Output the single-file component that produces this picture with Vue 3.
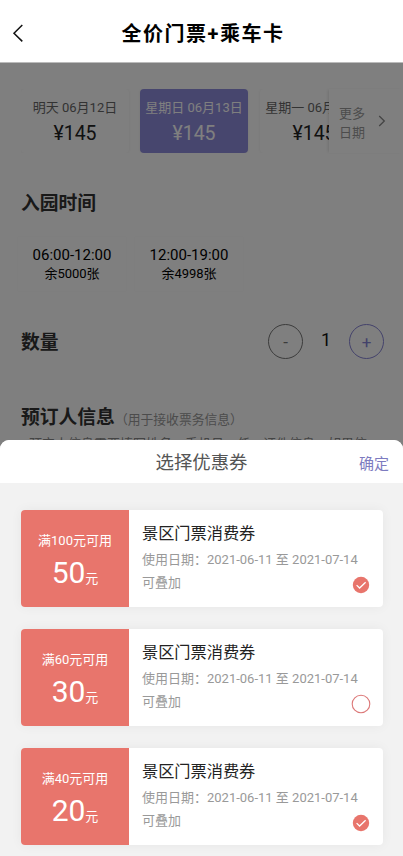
<script setup>
const dates = [
  { label: '明天 06月12日', price: '¥145' },
  { label: '星期日 06月13日', price: '¥145', active: true },
  { label: '星期一 06月14日', price: '¥145' },
]
const slots = [
  { time: '06:00-12:00', left: '余5000张' },
  { time: '12:00-19:00', left: '余4998张' },
]
const coupons = [
  { min: 100, value: 50, checked: true },
  { min: 60, value: 30, checked: false },
  { min: 40, value: 20, checked: true },
]
</script>

<template>
  <div class="screen">
    <header class="nav">
      <svg class="back" viewBox="0 0 12 20" width="12" height="20"><path d="M10.3 2 2 10.2l8.3 8.2" /></svg>
      <h1>全价门票+乘车卡</h1>
    </header>

    <main class="page">
      <h2 class="title first">游玩日期</h2>
      <div class="dates">
        <div class="strip">
          <div v-for="d in dates" :key="d.label" class="date" :class="{ active: d.active }">
            <span class="day">{{ d.label }}</span>
            <span class="price">{{ d.price }}</span>
          </div>
        </div>
        <div class="more">
          <span>更多<br />日期</span>
          <svg viewBox="0 0 8 12" width="8" height="12"><path d="M1.2 1 6.3 6l-5.1 5" /></svg>
        </div>
      </div>

      <h2 class="title time-title">入园时间</h2>
      <div class="slots">
        <div v-for="s in slots" :key="s.time" class="slot">
          <span class="time">{{ s.time }}</span>
          <span class="left">{{ s.left }}</span>
        </div>
      </div>

      <div class="quantity">
        <h2 class="title">数量</h2>
        <div class="stepper">
          <button class="step">-</button>
          <span class="count">1</span>
          <button class="step plus">+</button>
        </div>
      </div>

      <div class="booker">
        <h2 class="title">预订人信息</h2>
        <span class="hint">（用于接收票务信息）</span>
      </div>
      <p class="notice">预定人信息需要填写姓名、手机号、任一证件信息，如果信</p>
      <div class="mask"></div>
    </main>

    <section class="sheet">
      <div class="sheet-head">
        <span class="sheet-title">选择优惠券</span>
        <span class="confirm">确定</span>
      </div>
      <div class="list">
        <article v-for="c in coupons" :key="c.min" class="coupon">
          <div class="amount">
            <span class="rule">满{{ c.min }}元可用</span>
            <span class="value">{{ c.value }}<small>元</small></span>
          </div>
          <div class="info">
            <h3>景区门票消费券</h3>
            <p>使用日期：2021-06-11 至 2021-07-14</p>
            <p>可叠加</p>
          </div>
          <svg class="radio" viewBox="0 0 20 20" width="20" height="20">
            <template v-if="c.checked">
              <circle class="disc" cx="10" cy="10" r="8.2" />
              <path class="tick" d="m5.6 10.1 3 2.9 6-5.8" />
            </template>
            <circle v-else class="ring" cx="10" cy="10" r="8.8" />
          </svg>
        </article>
      </div>
    </section>
  </div>
</template>

<style>
body {
  margin: 0;
}
</style>

<style scoped>
.screen {
  width: 403px;
  height: 856px;
  display: flex;
  flex-direction: column;
  overflow: hidden;
  background: #808080;
  font-family: Roboto, "Noto Sans CJK SC", sans-serif;
  color: #222;
}
h1, h2, h3, p {
  margin: 0;
}
.nav {
  flex: none;
  height: 63px;
  box-sizing: border-box;
  padding: 4px 13px 0 12px;
  display: flex;
  align-items: center;
  background: #fff;
  border-bottom: 1px solid #bbb;
}
.back path {
  fill: none;
  stroke: #111;
  stroke-width: 1.5;
}
.nav h1 {
  flex: 1;
  margin-right: 12px;
  padding: 2px 0 0 4px;
  text-align: center;
  font-size: 20px;
  line-height: 28px;
  letter-spacing: 1.5px;
  font-weight: 700;
  color: #000;
}
.page {
  position: relative;
  flex: none;
  height: 377px;
  overflow: hidden;
  background: #fff;
}
.mask {
  position: absolute;
  inset: 0;
  background: rgba(0, 0, 0, 0.5);
}
.title {
  font-size: 18.8px;
  line-height: 28px;
  font-weight: 700;
  color: #333;
}
.first {
  margin: -22px 0 0 21px;
}
.dates {
  display: flex;
  margin: 20px 0 0 21px;
}
.strip {
  width: 308px;
  display: flex;
  gap: 11px;
  overflow: hidden;
}
.date {
  flex: none;
  width: 108px;
  height: 64px;
  box-sizing: border-box;
  padding-top: 9px;
  display: flex;
  flex-direction: column;
  align-items: center;
  border-radius: 4px;
  box-shadow: 0 0 3px rgba(0, 0, 0, 0.08);
}
.date:last-child {
  margin-left: 1px;
}
.date.active {
  background: #8f8cdd;
}
.day {
  font-size: 13px;
  line-height: 19px;
  color: #666;
  white-space: nowrap;
}
.price {
  margin-top: 4px;
  font-size: 19.5px;
  line-height: 26px;
  color: #222;
}
.active .day,
.active .price {
  color: #fff;
}
.more {
  flex: 1;
  display: flex;
  align-items: center;
  gap: 13px;
  padding: 3px 0 0 10px;
  box-shadow: -2px 0 3px -1px rgba(0, 0, 0, 0.12);
  font-size: 13px;
  line-height: 19px;
  color: #999;
}
.more svg path {
  fill: none;
  stroke: #888;
  stroke-width: 1.3;
}
.more svg {
  margin-top: -3px;
}
.time-title {
  margin: 37px 0 0 21px;
}
.slots {
  display: flex;
  gap: 9px;
  margin: 19px 0 0 18px;
}
.slot {
  width: 108px;
  height: 54px;
  box-sizing: border-box;
  padding-top: 8px;
  display: flex;
  flex-direction: column;
  align-items: center;
  color: #000;
  box-shadow: 0 0 3px rgba(0, 0, 0, 0.04);
}
.time {
  font-size: 15px;
  line-height: 20px;
}
.left {
  font-size: 13px;
  line-height: 18px;
}
.quantity {
  display: flex;
  justify-content: space-between;
  align-items: center;
  margin: 33px 19px 0 21px;
}
.quantity .title {
  padding-top: 2px;
}
.stepper {
  display: flex;
  align-items: center;
}
.step {
  width: 35px;
  height: 35px;
  padding: 0;
  border: 1px solid #777;
  border-radius: 50%;
  background: none;
  font: 17px/30px Roboto, sans-serif;
  color: #777;
}
.plus {
  border-color: #8784d6;
  color: #8784d6;
}
.count {
  width: 46px;
  padding-bottom: 3px;
  text-align: center;
  font-size: 18px;
  line-height: 26px;
  color: #111;
}
.booker {
  display: flex;
  align-items: center;
  margin: 45px 0 0 21px;
}
.hint {
  font-size: 12.8px;
  color: #999;
  line-height: 20px;
  padding-top: 3px;
}
.notice {
  margin: 2px 0 0 29px;
  font-size: 13px;
  line-height: 20px;
  color: #888;
  white-space: nowrap;
}
.sheet {
  flex: none;
  height: 416px;
  border-radius: 9px 9px 0 0;
  overflow: hidden;
  background: #f2f2f2;
}
.sheet-head {
  position: relative;
  height: 43px;
  box-sizing: border-box;
  padding-top: 3px;
  display: flex;
  align-items: center;
  justify-content: center;
  background: #fff;
}
.sheet-title {
  font-size: 18.4px;
  line-height: 28px;
  color: #555;
}
.confirm {
  position: absolute;
  right: 14px;
  top: 13px;
  font-size: 15px;
  line-height: 22px;
  color: #7d7bc0;
}
.list {
  display: flex;
  flex-direction: column;
  gap: 22px;
  padding: 27px 20px 0 21px;
}
.coupon {
  position: relative;
  display: flex;
  height: 97px;
  border-radius: 4px;
  background: #fff;
  box-shadow: 0 0 12px rgba(0, 0, 0, 0.05);
}
.amount {
  width: 108px;
  box-sizing: border-box;
  padding-top: 21px;
  display: flex;
  flex-direction: column;
  align-items: center;
  border-radius: 4px 0 0 4px;
  background: #e8756c;
  color: #fff;
}
.rule {
  font-size: 13px;
  line-height: 20px;
}
.value {
  margin-top: 3px;
  font-size: 30px;
  line-height: 38px;
}
.value small {
  font-size: 13px;
}
.info {
  padding: 12px 0 0 13px;
}
.info h3 {
  font-size: 16.2px;
  line-height: 24px;
  font-weight: 400;
  color: #222;
}
.info p {
  margin-top: 3px;
  font-size: 13px;
  line-height: 22px;
  color: #999;
}
.info p + p {
  margin-top: 1px;
}
.radio {
  position: absolute;
  right: 12px;
  bottom: 12px;
}
.disc {
  fill: #e8756c;
}
.tick {
  fill: none;
  stroke: #fff;
  stroke-width: 1.3;
}
.ring {
  fill: none;
  stroke: #dc7878;
  stroke-width: 1.1;
}
</style>
